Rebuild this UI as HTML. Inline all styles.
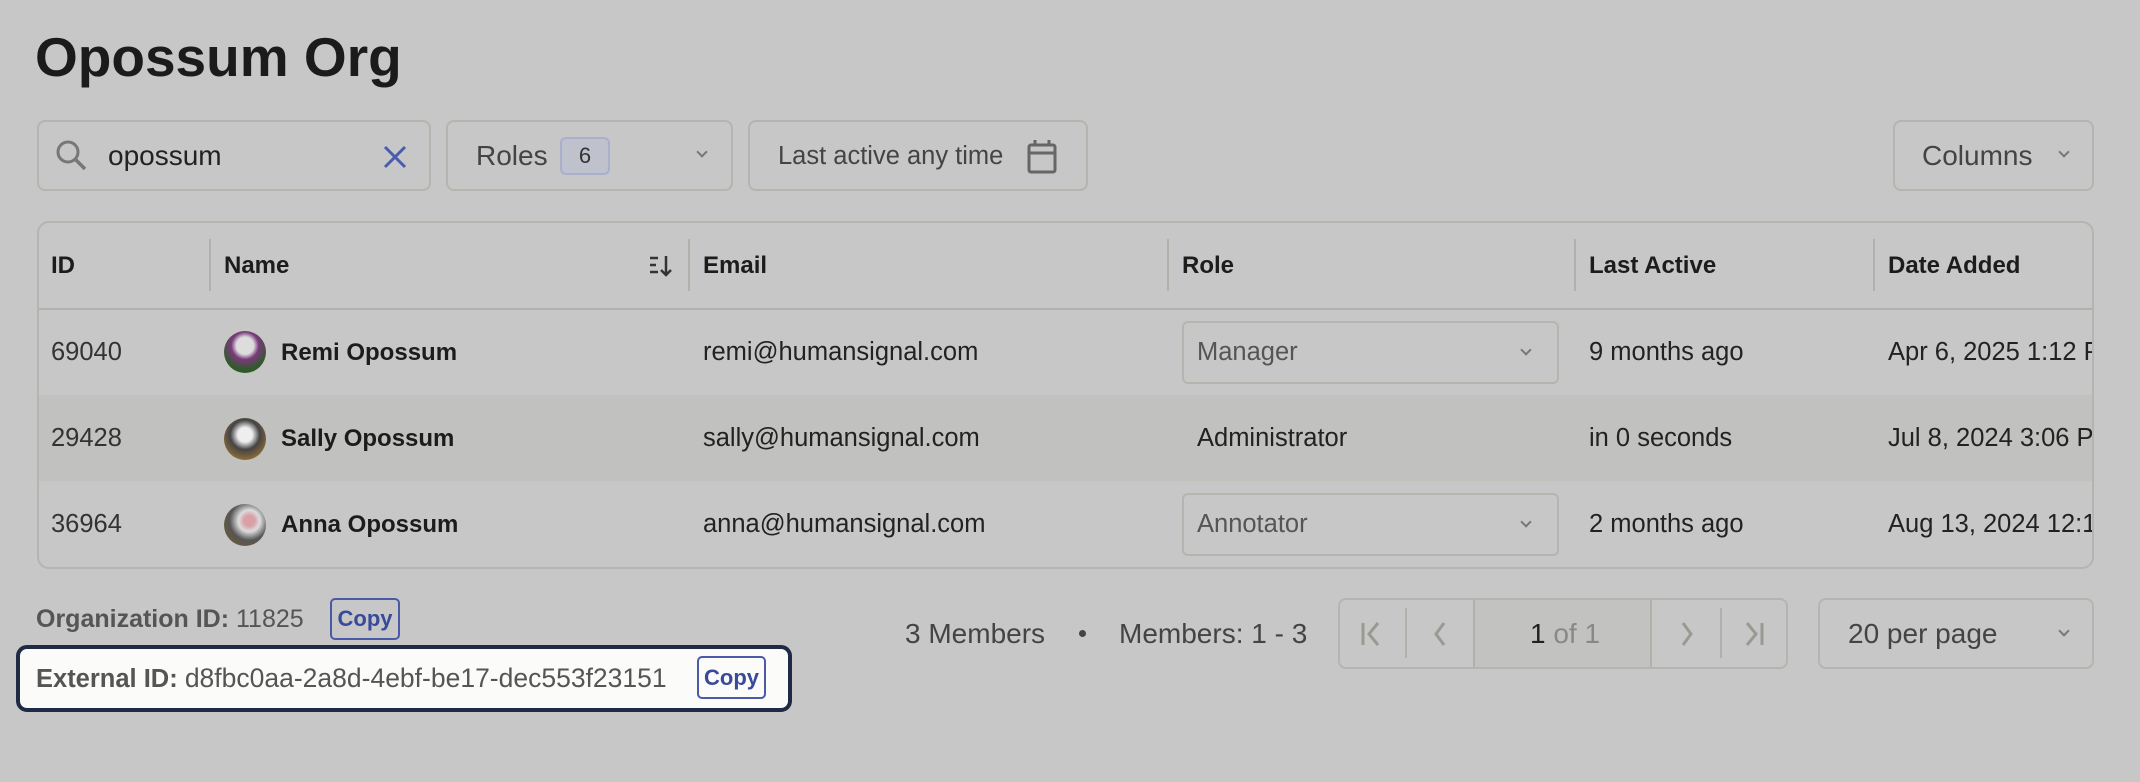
<!DOCTYPE html>
<html><head><meta charset="utf-8"><style>
*{box-sizing:border-box;margin:0;padding:0}
body{width:2140px;height:782px;background:#c7c7c7;font-family:"Liberation Sans",sans-serif;color:#1c1c1c;position:relative;overflow:hidden}
.a{position:absolute}
.box{position:absolute;border:2px solid #b6b4ae;border-radius:8px}
.t{position:absolute;white-space:nowrap;line-height:1}
.vl{position:absolute;width:2px;background:#b2b0aa}
.chev{position:absolute;width:10px;height:10px;border-right:2px solid #777;border-bottom:2px solid #777;transform:rotate(45deg)}
.av{position:absolute;width:42px;height:42px;border-radius:50%}
.copy{position:absolute;border:2px solid #4a5aa8;border-radius:5px;color:#3a4a9a;font-weight:bold;font-size:22px;display:flex;align-items:center;justify-content:center}
.b{font-size:25.5px}
.n{font-size:24px;font-weight:bold}
</style></head><body>
<div class="t" style="left:35px;top:30px;font-size:55px;font-weight:bold;color:#1b1b1b">Opossum Org</div>

<div class="box" style="left:37px;top:120px;width:394px;height:71px"></div>
<svg class="a" style="left:54px;top:138px" width="36" height="36" viewBox="0 0 36 36"><circle cx="14" cy="14" r="10" fill="none" stroke="#777" stroke-width="3"/><line x1="21" y1="21" x2="31" y2="31" stroke="#777" stroke-width="3.5"/></svg>
<div class="t" style="left:108px;top:142px;font-size:28px;color:#222">opossum</div>
<svg class="a" style="left:382px;top:144px" width="26" height="26"><path d="M3 3L23 23M23 3L3 23" stroke="#4a5cb0" stroke-width="3"/></svg>

<div class="box" style="left:446px;top:120px;width:287px;height:71px"></div>
<div class="t" style="left:476px;top:142px;font-size:28px;color:#444">Roles</div>
<div class="a" style="left:560px;top:137px;width:50px;height:38px;border:2px solid #aab0cc;background:#bfc2cc;border-radius:6px;font-size:22px;color:#333;text-align:center;line-height:34px">6</div>
<div class="chev" style="left:698px;top:148px;width:8px;height:8px"></div>

<div class="box" style="left:748px;top:120px;width:340px;height:71px"></div>
<div class="t" style="left:778px;top:144px;font-size:25.5px;color:#444">Last active any time</div>
<svg class="a" style="left:1026px;top:139px" width="32" height="36"><rect x="3" y="6" width="26" height="27" rx="2" fill="none" stroke="#666" stroke-width="3"/><line x1="3" y1="14" x2="29" y2="14" stroke="#666" stroke-width="3"/><line x1="9" y1="1" x2="9" y2="7" stroke="#666" stroke-width="3"/><line x1="23" y1="1" x2="23" y2="7" stroke="#666" stroke-width="3"/></svg>

<div class="box" style="left:1893px;top:120px;width:201px;height:71px"></div>
<div class="t" style="left:1922px;top:142px;font-size:28px;color:#444">Columns</div>
<div class="chev" style="left:2060px;top:148px;width:8px;height:8px"></div>

<!-- table -->
<div class="box" style="left:37px;top:221px;width:2057px;height:348px;border-radius:12px;overflow:hidden">
 <div class="a" style="left:0;top:172px;width:2057px;height:86px;background:#c1c1c0"></div>
 <div class="a" style="left:0;top:85px;width:2057px;height:2px;background:#b2b0aa"></div>
</div>
<div class="vl" style="left:209px;top:239px;height:52px"></div>
<div class="vl" style="left:688px;top:239px;height:52px"></div>
<div class="vl" style="left:1167px;top:239px;height:52px"></div>
<div class="vl" style="left:1574px;top:239px;height:52px"></div>
<div class="vl" style="left:1873px;top:239px;height:52px"></div>
<div class="t n" style="left:51px;top:254px">ID</div>
<div class="t n" style="left:224px;top:254px">Name</div>
<svg class="a" style="left:648px;top:254px" width="26" height="24"><path d="M2 4h8M2 11h6M2 18h8M18 2v19M13 16l5 5 5-5" stroke="#333" stroke-width="2.5" fill="none"/></svg>
<div class="t n" style="left:703px;top:254px">Email</div>
<div class="t n" style="left:1182px;top:254px">Role</div>
<div class="t n" style="left:1589px;top:254px">Last Active</div>
<div class="t n" style="left:1888px;top:254px">Date Added</div>

<!-- row 1 -->
<div class="t b" style="left:51px;top:340px;color:#333">69040</div>
<div class="av" style="left:224px;top:331px;background:radial-gradient(circle at 50% 35%,#ddd 0 25%,#7a3a7a 40%,#2e5a2a 70%)"></div>
<div class="t n" style="left:281px;top:341px">Remi Opossum</div>
<div class="t b" style="left:703px;top:340px;color:#222">remi@humansignal.com</div>
<div class="box" style="left:1182px;top:321px;width:377px;height:63px;border-radius:6px"></div>
<div class="t b" style="left:1197px;top:340px;color:#555">Manager</div>
<div class="chev" style="left:1522px;top:346px;width:8px;height:8px"></div>
<div class="t b" style="left:1589px;top:340px;color:#222">9 months ago</div>
<div class="t b" style="left:1888px;top:340px;color:#222;width:204px;overflow:hidden">Apr 6, 2025 1:12 PM</div>
<!-- row 2 -->
<div class="t b" style="left:51px;top:426px;color:#333">29428</div>
<div class="av" style="left:224px;top:418px;background:radial-gradient(circle at 50% 40%,#eee 0 22%,#444 45%,#8a6a3a 75%)"></div>
<div class="t n" style="left:281px;top:427px">Sally Opossum</div>
<div class="t b" style="left:703px;top:426px;color:#222">sally@humansignal.com</div>
<div class="t b" style="left:1197px;top:426px;color:#222">Administrator</div>
<div class="t b" style="left:1589px;top:426px;color:#222">in 0 seconds</div>
<div class="t b" style="left:1888px;top:426px;color:#222;width:204px;overflow:hidden">Jul 8, 2024 3:06 PM</div>
<!-- row 3 -->
<div class="t b" style="left:51px;top:512px;color:#333">36964</div>
<div class="av" style="left:224px;top:504px;background:radial-gradient(circle at 60% 40%,#d9a0a8 0 15%,#ddd 30%,#555 55%,#6a5a3a 80%)"></div>
<div class="t n" style="left:281px;top:513px">Anna Opossum</div>
<div class="t b" style="left:703px;top:512px;color:#222">anna@humansignal.com</div>
<div class="box" style="left:1182px;top:493px;width:377px;height:63px;border-radius:6px"></div>
<div class="t b" style="left:1197px;top:512px;color:#555">Annotator</div>
<div class="chev" style="left:1522px;top:518px;width:8px;height:8px"></div>
<div class="t b" style="left:1589px;top:512px;color:#222">2 months ago</div>
<div class="t b" style="left:1888px;top:512px;color:#222;width:204px;overflow:hidden">Aug 13, 2024 12:10 PM</div>

<!-- footer -->
<div class="t" style="left:36px;top:607px;font-size:25px;color:#555"><b>Organization ID:</b> 11825</div>
<div class="copy" style="left:330px;top:598px;width:70px;height:42px">Copy</div>
<div class="a" style="left:16px;top:645px;width:776px;height:67px;border:4px solid #1f2a44;border-radius:11px;background:#fbfbf9"></div>
<div class="t" style="left:36px;top:665px;font-size:25.5px;color:#555"><b>External ID:</b> <span style="font-size:26.5px">d8fbc0aa-2a8d-4ebf-be17-dec553f23151</span></div>
<div class="copy" style="left:697px;top:656px;width:69px;height:43px">Copy</div>

<div class="t" style="left:905px;top:620px;font-size:28px;color:#444">3 Members</div>
<div class="a" style="left:1079px;top:630px;width:7px;height:7px;border-radius:50%;background:#444"></div>
<div class="t" style="left:1119px;top:620px;font-size:28px;color:#444">Members: 1 - 3</div>

<div class="box" style="left:1338px;top:598px;width:450px;height:71px;overflow:hidden"><div class="a" style="left:133px;top:0;width:179px;height:71px;background:#c2c2c1;border-left:2px solid #b2b0aa;border-right:2px solid #b2b0aa"></div></div>
<div class="vl" style="left:1405px;top:608px;height:50px"></div>
<div class="vl" style="left:1720px;top:608px;height:50px"></div>
<svg class="a" style="left:1360px;top:620px" width="24" height="28"><path d="M3 3v22M18 3L9 14l9 11" stroke="#9a9992" stroke-width="3" fill="none"/></svg>
<svg class="a" style="left:1430px;top:620px" width="20" height="28"><path d="M14 3L6 14l8 11" stroke="#9a9992" stroke-width="3" fill="none"/></svg>
<div class="t" style="left:1530px;top:620px;font-size:28px;color:#888"><span style="color:#222">1</span> of 1</div>
<svg class="a" style="left:1677px;top:620px" width="20" height="28"><path d="M6 3l8 11-8 11" stroke="#9a9992" stroke-width="3" fill="none"/></svg>
<svg class="a" style="left:1742px;top:620px" width="24" height="28"><path d="M5 3l9 11-9 11M20 3v22" stroke="#9a9992" stroke-width="3" fill="none"/></svg>

<div class="box" style="left:1818px;top:598px;width:276px;height:71px"></div>
<div class="t" style="left:1848px;top:620px;font-size:28px;color:#444">20 per page</div>
<div class="chev" style="left:2060px;top:627px;width:8px;height:8px"></div>
</body></html>
